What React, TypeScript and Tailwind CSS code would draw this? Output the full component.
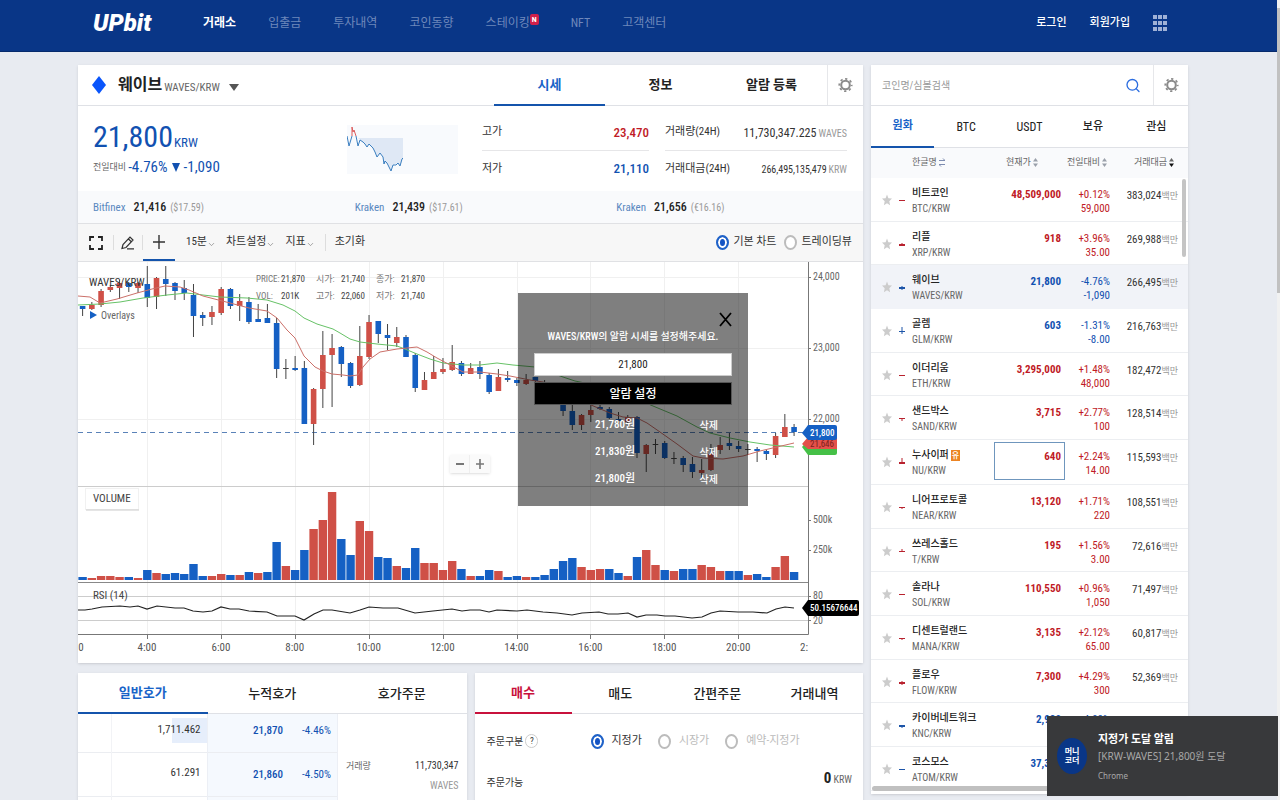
import { useState } from "react";
import type { ReactNode } from "react";
import { ChevronDown, Search } from "lucide-react";

type Coin = {
  name: string;
  code: string;
  price: string;
  rate: string;
  change: string;
  volume: string;
  up: boolean;
  // body height, wick above, wick below
  candle: [number, number, number];
  warn?: boolean;
};

const COINS: Coin[] = [
  { name: "비트코인", code: "BTC", price: "48,509,000", rate: "+0.12%", change: "59,000", volume: "383,024", up: true, candle: [1, 0, 0] },
  { name: "리플", code: "XRP", price: "918", rate: "+3.96%", change: "35.00", volume: "269,988", up: true, candle: [2, 1, 0] },
  { name: "웨이브", code: "WAVES", price: "21,800", rate: "-4.76%", change: "-1,090", volume: "266,495", up: false, candle: [2, 1, 1] },
  { name: "골렘", code: "GLM", price: "603", rate: "-1.31%", change: "-8.00", volume: "216,763", up: false, candle: [1, 4, 2] },
  { name: "이더리움", code: "ETH", price: "3,295,000", rate: "+1.48%", change: "48,000", volume: "182,472", up: true, candle: [1, 0, 0] },
  { name: "샌드박스", code: "SAND", price: "3,715", rate: "+2.77%", change: "100", volume: "128,514", up: true, candle: [1, 0, 2] },
  { name: "누사이퍼", code: "NU", price: "640", rate: "+2.24%", change: "14.00", volume: "115,593", up: true, candle: [2, 4, 0], warn: true },
  { name: "니어프로토콜", code: "NEAR", price: "13,120", rate: "+1.71%", change: "220", volume: "108,551", up: true, candle: [1, 0, 1] },
  { name: "쓰레스홀드", code: "T", price: "195", rate: "+1.56%", change: "3.00", volume: "72,616", up: true, candle: [1, 2, 0] },
  { name: "솔라나", code: "SOL", price: "110,550", rate: "+0.96%", change: "1,050", volume: "71,497", up: true, candle: [1, 0, 0] },
  { name: "디센트럴랜드", code: "MANA", price: "3,135", rate: "+2.12%", change: "65.00", volume: "60,817", up: true, candle: [1, 0, 1] },
  { name: "플로우", code: "FLOW", price: "7,300", rate: "+4.29%", change: "300", volume: "52,369", up: true, candle: [2, 1, 1] },
  { name: "카이버네트워크", code: "KNC", price: "2,980", rate: "-4.98%", change: "", volume: "", up: false, candle: [2, 0, 1] },
  { name: "코스모스", code: "ATOM", price: "37,310", rate: "", change: "", volume: "", up: false, candle: [1, 0, 0] },
];

// high, body top, body bottom, low, kind (r: up, b: down, k: flat)
type Candle = [number, number, number, number, "r" | "b" | "k"];

const CANDLES: Candle[] = [
  [44, 44, 47, 54, "b"], [40, 43, 47, 48, "r"], [27, 29, 43, 45, "r"], [23, 25, 28, 30, "r"],
  [18, 21, 26, 37, "r"], [20, 21, 25, 30, "b"], [20, 21, 26, 31, "r"], [4, 22, 36, 45, "b"],
  [15, 16, 35, 47, "r"], [4, 17, 22, 34, "b"], [20, 21, 29, 38, "b"], [18, 26, 31, 38, "b"],
  [22, 33, 54, 75, "b"], [50, 53, 56, 64, "b"], [44, 50, 55, 63, "r"], [25, 27, 51, 53, "r"],
  [26, 27, 44, 47, "b"], [32, 39, 44, 59, "r"], [35, 40, 60, 62, "b"], [42, 57, 60, 60, "b"],
  [42, 56, 61, 61, "b"], [56, 61, 107, 116, "b"], [97, 106, 107, 117, "k"], [94, 106, 108, 109, "b"],
  [99, 106, 162, 162, "b"], [126, 127, 162, 183, "r"], [69, 93, 127, 146, "r"], [72, 86, 93, 145, "r"],
  [84, 85, 102, 115, "b"], [100, 101, 124, 126, "b"], [64, 94, 123, 124, "r"], [53, 60, 95, 97, "r"],
  [59, 59, 72, 81, "b"], [62, 73, 76, 88, "b"], [65, 75, 81, 85, "r"], [73, 75, 95, 95, "b"],
  [91, 93, 126, 130, "b"], [110, 118, 128, 128, "r"], [94, 110, 117, 117, "r"], [96, 107, 110, 112, "r"],
  [83, 100, 108, 109, "r"], [99, 101, 112, 114, "b"], [101, 106, 112, 112, "r"], [99, 105, 112, 117, "b"],
  [111, 113, 130, 132, "b"], [107, 115, 129, 129, "r"], [109, 116, 118, 120, "b"], [116, 118, 121, 124, "b"],
  [112, 118, 122, 123, "r"], [115, 115, 119, 123, "b"], [118, 120, 130, 133, "b"], [126, 130, 140, 141, "b"],
  [138, 140, 149, 154, "b"], [142, 149, 163, 168, "b"], [152, 153, 163, 168, "r"], [141, 148, 153, 160, "r"],
  [142, 145, 147, 148, "b"], [145, 147, 156, 157, "b"], [150, 157, 159, 161, "b"], [153, 155, 160, 161, "r"],
  [154, 155, 191, 196, "b"], [182, 183, 192, 210, "r"], [177, 182, 183, 192, "k"], [179, 181, 196, 197, "b"],
  [190, 196, 197, 202, "k"], [194, 196, 203, 210, "b"], [195, 202, 210, 216, "b"], [197, 208, 211, 216, "r"],
  [182, 192, 208, 209, "r"], [175, 183, 188, 192, "r"], [171, 181, 184, 188, "b"], [179, 184, 187, 190, "b"],
  [182, 187, 188, 193, "k"], [185, 187, 189, 200, "b"], [188, 189, 192, 198, "b"], [171, 174, 193, 196, "r"],
  [152, 165, 175, 175, "r"], [162, 165, 170, 174, "b"],
];

// bar heights, negative when the candle closed down
const VOLUMES = [
  -3, 2, 4, 4, 3, -3, 2, -10, 7, -6, -7, -6, -16, -4, 4, 6, -5, 5, -8, 7, -8, -38, 14, -10, -30, 51,
  60, 88, -41, -25, 59, 49, -23, -22, 14, -12, -32, 17, 17, 10, 19, -11, 4, -4, -10, 9, -3, -4, 3,
  -3, -5, -11, -19, -22, 13, 10, 11, -11, -7, 4, -23, 30, 15, -10, 9, -11, -11, 15, 13, 9, -9, -9,
  5, -6, -3, 13, 24, -8,
];

const MA_RED =
  "0,34 12,35 22,41 39,37 59,31 74,27 87,24 102,25 111,28 125,34 152,41 171,46 189,49 199,56 209,68 217,76 226,94 237,105 245,109 254,112 265,113 272,114 280,113 285,105 292,97 302,90 319,87 339,85 349,90 359,96 372,103 385,110 402,110 419,112 432,114 452,118 465,120 485,126 499,135 513,143 532,151 545,155 559,156 569,161 582,170 599,182 615,194 625,196 645,197 665,194 682,189 699,185 716,181";

const MA_GREEN =
  "0,43 22,42 42,40 65,36 89,33 109,31 125,33 142,35 169,36 189,38 205,43 217,49 226,56 239,62 255,67 262,71 272,77 282,80 299,82 319,84 327,87 339,92 352,97 365,101 385,103 402,103 419,101 435,103 457,105 485,115 497,119 532,126 575,144 599,154 619,165 632,171 652,176 672,180 692,183 716,185";

const RSI =
  "0,348 7,348 14,347 24,345 42,344 52,345 60,344 69,347 79,344 97,346 106,346 115,349 125,350 134,349 143,345 152,347 161,347 171,349 189,350 199,354 217,354 226,358 236,352 245,348 254,348 272,351 282,348 291,345 305,346 320,346 337,351 355,349 374,347 384,349 392,348 402,348 411,350 419,348 439,349 449,348 465,350 479,351 494,353 504,351 521,350 530,352 540,352 550,351 559,355 568,353 579,353 587,354 597,354 614,356 624,355 633,351 642,349 660,350 675,350 689,351 698,347 707,345 716,346";

const HOURS = ["4:00", "6:00", "8:00", "10:00", "12:00", "14:00", "16:00", "18:00", "20:00"];
const STEP = 9.24;
const FILL = { r: "#cf5047", b: "#1560c4", k: "#444" };

function GearIcon() {
  return (
    <svg viewBox="0 0 16 16" className="h-4 w-[15px]" fill="none" stroke="#8b8b8b">
      <circle cx="8" cy="8" r="4.6" strokeWidth="2.2" />
      <circle cx="8" cy="8" r="6.6" strokeWidth="1.9" strokeDasharray="2.4 2.783" strokeDashoffset="1.2" />
    </svg>
  );
}

function CandleIcon({ candle, up }: { candle: Coin["candle"]; up: boolean }) {
  const [body, above, below] = candle;
  const color = up ? "#b8222f" : "#1d55a8";
  return (
    <svg viewBox="0 0 6 14" className="h-[14px] w-[6px]" fill={color}>
      <rect x="0" y="7" width="6" height={body} />
      <rect x="2.5" y={7 - above} width="1" height={above + body + below} />
    </svg>
  );
}

function TopNav() {
  const items = ["입출금", "투자내역", "코인동향", "스테이킹", "NFT", "고객센터"];
  return (
    <header className="h-[52px] shrink-0 border-b border-[#062a6c] bg-[#093687] pr-[113px] pl-[93px] text-white">
      <div className="flex h-[46px] items-center">
        <a href="#" className="w-[110px] font-[Roboto] text-[24px] leading-none font-black italic">
          UPbit
        </a>
        <nav className="flex flex-1 items-center gap-8 text-[12px]">
          <a href="#" className="font-bold">거래소</a>
          {items.map((item) => (
            <a key={item} href="#" className="flex items-start text-[#6f88bb]">
              {item}
              {item === "스테이킹" && (
                <span className="rounded-[2px] bg-[#d0204b] px-0.5 text-[8px] leading-[11px] font-bold text-white">
                  N
                </span>
              )}
            </a>
          ))}
        </nav>
        <div className="flex items-center gap-[23px] text-[11px] font-medium">
          <a href="#">로그인</a>
          <a href="#">회원가입</a>
          <button type="button" aria-label="메뉴" className="grid grid-cols-3 gap-x-px gap-y-0.5">
            {Array.from({ length: 9 }, (_, i) => (
              <span key={i} className="h-1 w-1 bg-[#9fb1d6]" />
            ))}
          </button>
        </div>
      </div>
    </header>
  );
}

function Sparkline() {
  return (
    <svg viewBox="0 0 111 49" className="mt-[19px] h-[49px] w-[111px]" fill="none" strokeLinejoin="round">
      <rect width="111" height="49" fill="#f8fafd" />
      <path
        d="M11 13 L13 15 L18 19 L20 22 L22 19 L26 23 L30 32 L33 28 L36 32 L37 39 L40 38 L44 46 L46 40 L51 38 L53 41 L56 33 V13Z"
        fill="#dfe8f5"
      />
      <path
        d="M0 11 L2 21 L5 11 M9 11 L11 21 L13 15 L16 17 L18 19 L20 22 L22 19 L26 23 L28 27 L30 32 L33 28 L36 32 L37 39 L38 36 L40 38 L44 46 L46 40 L49 40 L51 38 L53 41 L55 34 L56 33"
        stroke="#3b7fc0"
      />
      <path d="M5 11 L5 2 L6 7 L7 5 L9 11" stroke="#dc5b5b" />
    </svg>
  );
}

function Stat({ label, value, unit, tone }: { label: string; value: string; unit?: string; tone: string }) {
  return (
    <div className="flex h-9 items-center justify-between">
      <dt className="text-[11px] text-[#333]">{label}</dt>
      <dd className={tone}>
        {value}
        {unit && <span className="ml-0.5 text-[10px] text-[#999]">{unit}</span>}
      </dd>
    </div>
  );
}

function CoinSummary() {
  const exchanges = [
    ["Bitfinex", "21,416", "($17.59)"],
    ["Kraken", "21,439", "($17.61)"],
    ["Kraken", "21,656", "(€16.16)"],
  ];
  return (
    <>
      <div className="flex h-[41px] border-b border-[#dfe1e6]">
        <div className="flex flex-1 items-center pl-[14px]">
          <svg viewBox="0 0 14 18" className="mr-3 h-[18px] w-[14px]">
            <path d="M7 0 L14 9 L7 18 L0 9Z" fill="#0a55fb" />
          </svg>
          <h1 className="text-[16px] font-bold text-[#222]">웨이브</h1>
          <span className="mt-1.5 ml-0.5 text-[11px] text-[#666]">WAVES/KRW</span>
          <button type="button" aria-label="코인 선택" className="mt-1 ml-[9px]">
            <svg viewBox="0 0 10 7" className="h-[7px] w-[10px]">
              <path d="M0 0H10L5 7Z" fill="#555" />
            </svg>
          </button>
        </div>
        <div className="flex text-[13px] font-bold text-[#222]">
          <button type="button" className="h-[41px] w-[111px] border-b-2 border-[#1454ac] text-[#1863c8]">시세</button>
          <button type="button" className="w-[111px]">정보</button>
          <button type="button" className="w-[111px]">알람 등록</button>
          <button type="button" aria-label="설정" className="flex w-9 items-center justify-center border-l border-[#e6e7ea]">
            <GearIcon />
          </button>
        </div>
      </div>

      <div className="flex h-[85px] pr-4 pl-[15px]">
        <div className="w-[254px]">
          <p className="mt-3 flex items-baseline leading-[38px] text-[#1151b1]">
            <strong className="text-[30px] font-normal">21,800</strong>
            <span className="ml-px text-[13px]">KRW</span>
          </p>
          <p className="-mt-1 flex items-center text-[15px] leading-[18px] text-[#1151b1]">
            <span className="mr-0.5 text-[9px] text-[#666]">전일대비</span>
            -4.76%
            <svg viewBox="0 0 8 9" className="mx-1 h-[9px] w-2">
              <path d="M0 0H8L4 9Z" fill="#1151b1" />
            </svg>
            -1,090
          </p>
        </div>
        <Sparkline />
        <dl className="ml-6 grid flex-1 grid-cols-[167fr_182fr] gap-x-4 pt-[9px]">
          <div className="divide-y divide-[#e6e6e8]">
            <Stat label="고가" value="23,470" tone="text-[13px] font-medium text-[#c01a26]" />
            <Stat label="저가" value="21,110" tone="text-[13px] font-medium text-[#1151b1]" />
          </div>
          <div className="divide-y divide-[#e6e6e8]">
            <Stat label="거래량(24H)" value="11,730,347.225" unit="WAVES" tone="text-[12px] text-[#333]" />
            <Stat label="거래대금(24H)" value="266,495,135,479" unit="KRW" tone="text-[10px] text-[#333]" />
          </div>
        </dl>
      </div>

      <div className="grid h-8 grid-cols-3 items-center bg-[#f9fafc]">
        {exchanges.map(([name, price, usd]) => (
          <p key={price} className="pl-[15px] text-[12px] font-medium text-[#222]">
            <span className="mr-2 text-[11px] font-normal text-[#5a88c0]">{name}</span>
            {price}
            <span className="ml-1 text-[10px] font-normal text-[#999]">{usd}</span>
          </p>
        ))}
      </div>
    </>
  );
}

function Radio({ name, checked, onChange, children }: {
  name: string;
  checked: boolean;
  onChange: () => void;
  children: ReactNode;
}) {
  return (
    <label className="flex items-center gap-1">
      <input
        type="radio"
        name={name}
        checked={checked}
        onChange={onChange}
        className="h-[15px] w-[13px] shrink-0 appearance-none rounded-[50%] border-2 border-[#bcbcbc] bg-white checked:border-[#1f62c8] checked:bg-[#1454c4] checked:shadow-[inset_0_0_0_2px_white]"
      />
      {children}
    </label>
  );
}

function ChartToolbar() {
  const [view, setView] = useState("basic");
  return (
    <div className="flex h-[39px] items-center border-y border-[#e0e1e4] bg-[#f7f7f7] pr-[11px] text-[11px] text-[#333]">
      <button type="button" aria-label="전체화면" className="flex w-[35px] justify-center">
        <svg viewBox="0 0 14 14" className="h-[14px] w-[14px]" fill="none" stroke="#222" strokeWidth="1.8">
          <path d="M1 5V1H5 M9 1H13V5 M13 9V13H9 M5 13H1V9" />
        </svg>
      </button>
      <button type="button" aria-label="그리기" className="flex w-[30px] justify-center border-x border-[#ddd]">
        <svg viewBox="0 0 14 14" className="h-[15px] w-[14px]" fill="none" stroke="#333" strokeWidth="1.2">
          <path d="M1 13 L2 9 L9 1.5 L12 4.5 L5 12 Z M7.5 3.5 L10.5 6.5 M6 13.3 H13" />
        </svg>
      </button>
      <button type="button" aria-label="십자선" className="flex h-[37px] w-8 items-center justify-center border-b-2 border-[#1454ac]">
        <svg viewBox="0 0 12 14" className="h-[14px] w-3" stroke="#333" strokeWidth="1.4">
          <path d="M6 0V14 M0 7H12" />
        </svg>
      </button>
      <div className="ml-[11px] flex items-center gap-[10px]">
        {["15분", "차트설정", "지표"].map((item) => (
          <button key={item} type="button" className="flex items-center">
            {item}
            <ChevronDown className="mt-1 h-[9px] w-[9px] text-[#888]" />
          </button>
        ))}
        <button type="button" className="border-l border-[#ddd] pl-[9px]">초기화</button>
      </div>
      <div className="ml-auto flex gap-2">
        <Radio name="chart" checked={view === "basic"} onChange={() => setView("basic")}>기본 차트</Radio>
        <Radio name="chart" checked={view === "tv"} onChange={() => setView("tv")}>트레이딩뷰</Radio>
      </div>
    </div>
  );
}

function PriceChart() {
  return (
    <svg viewBox="0 0 785 401" className="block h-auto w-full" role="img" aria-label="WAVES/KRW 15분 차트">
      <g stroke="#f0f0f0">
        <path d="M0 15.5H730 M0 86.5H730 M0 157.5H730" />
        {HOURS.map((hour, i) => (
          <path key={hour} d={`M${Math.round(69 + i * 73.9) + 0.5} 0V372`} />
        ))}
      </g>
      <path d="M0 170.5H726" stroke="#5a82b8" strokeDasharray="5 4" />

      {CANDLES.map(([high, top, bottom, low, kind], i) => {
        const x = 4.6 + i * STEP;
        return (
          <g key={i}>
            <rect x={x - 0.5} y={high} width="1" height={low - high} fill="#444" />
            <rect x={x - 2.8} y={top} width="5.6" height={Math.max(bottom - top, 1)} fill={FILL[kind]} />
          </g>
        );
      })}
      <polyline points={MA_GREEN} fill="none" stroke="#67c267" />
      <polyline points={MA_RED} fill="none" stroke="#cb7069" />

      {VOLUMES.map((volume, i) => (
        <rect
          key={i}
          x={0.4 + i * STEP}
          y={318 - Math.abs(volume)}
          width="8.4"
          height={Math.abs(volume)}
          fill={volume > 0 ? FILL.r : FILL.b}
        />
      ))}

      <path d="M0 224.5H730 M0 334.5H730 M0 358.5H730" stroke="#ccc" />
      <path d="M0 320.5H730" stroke="#888" />
      <path d="M0 372.5H730.5V0 M730 15.5H733 M730 86.5H733 M730 157.5H733 M730 258.5H733 M730 288.5H733 M730 334.5H733 M730 358.5H733" fill="none" stroke="#777" />
      <polyline points={RSI} fill="none" stroke="#222" strokeWidth="1.2" />

      <g className="fill-[#666] text-[10px]">
        <text x="735" y="18">24,000</text>
        <text x="735" y="89">23,000</text>
        <text x="735" y="160">22,000</text>
        <text x="735" y="261">500k</text>
        <text x="735" y="291">250k</text>
        <text x="735" y="337">80</text>
        <text x="735" y="362">20</text>
      </g>
      <g className="fill-[#555] text-[11px]" textAnchor="middle">
        {HOURS.map((hour, i) => (
          <g key={hour}>
            <path d={`M${Math.round(69 + i * 73.9) + 0.5} 372v5`} stroke="#777" />
            <text x={69 + i * 73.9} y="389">{hour}</text>
          </g>
        ))}
        <text x="3" y="389">0</text>
        <text x="726" y="389">2:</text>
      </g>

      <path d="M724 185L730 178H757Q759 178 759 180V191Q759 193 757 193H730Z" fill="#45c047" />
      <path d="M724 182L730 175H759V187H730Z" fill="#e4504a" />
      <text x="732" y="185" className="fill-[#7c1d1a] text-[9px]">21,646</text>
      <path d="M724 171L730 163H757Q759 163 759 165V176Q759 178 757 178H730Z" fill="#1560c4" />
      <text x="732" y="174" className="fill-white text-[9px] font-medium">21,800</text>
      <path d="M724 346L730 338H779Q781 338 781 340V352Q781 354 779 354H730Z" fill="#000" />
      <text x="732" y="349" className="fill-white text-[9px] font-medium">50.15676644</text>

      <text x="11" y="24" className="fill-[#333] text-[11px]">WAVES/KRW</text>
      <path d="M12 49L19 53L12 57Z" fill="#1560c4" />
      <text x="23" y="57" className="fill-[#666] text-[10px]">Overlays</text>
      <g className="fill-[#777] text-[9px]">
        <text x="178" y="20">PRICE:</text>
        <text x="178" y="37">VOL:</text>
        <text x="238" y="20">시가:</text>
        <text x="238" y="37">고가:</text>
        <text x="298" y="20">종가:</text>
        <text x="298" y="37">저가:</text>
      </g>
      <g className="fill-[#444] text-[9px]">
        <text x="203" y="20">21,870</text>
        <text x="203" y="37">201K</text>
        <text x="263" y="20">21,740</text>
        <text x="263" y="37">22,060</text>
        <text x="323" y="20">21,870</text>
        <text x="323" y="37">21,740</text>
      </g>

      <rect x="7.5" y="226.5" width="53" height="21" fill="#fff" stroke="#f1f1f1" />
      <path d="M8 248H61" stroke="#ccc" />
      <text x="15" y="240" className="fill-[#444] text-[11px]">VOLUME</text>
      <text x="15" y="337" className="fill-[#444] text-[11px]">RSI (14)</text>
    </svg>
  );
}

function AlarmPopup() {
  const [price, setPrice] = useState("21,800");
  const [alarms, setAlarms] = useState(["21,780", "21,830", "21,800"]);
  return (
    <section className="absolute top-[31px] left-[440px] h-[213px] w-[230px] bg-black/50 px-4 pt-[19px] text-white">
      <div className="flex justify-end">
        <button type="button" aria-label="닫기">
          <svg viewBox="0 0 13 15" className="h-[15px] w-[13px]" stroke="#000" strokeWidth="1.8">
            <path d="M1 1L12 14 M12 1L1 14" />
          </svg>
        </button>
      </div>
      <label htmlFor="alarm-price" className="mt-0.5 block text-center text-[10px] leading-[16px] font-medium">
        WAVES/KRW의 알람 시세를 설정해주세요.
      </label>
      <input
        id="alarm-price"
        value={price}
        onChange={(event) => setPrice(event.target.value)}
        className="mt-2 block h-[23px] w-full border border-[#ccc] bg-white text-center text-[11px] text-[#222]"
      />
      <button
        type="button"
        onClick={() => setAlarms([...alarms, price])}
        className="mt-[6px] h-[23px] w-full border border-[#555] bg-black text-[12px] font-medium"
      >
        알람 설정
      </button>
      <ul className="mt-[7px] text-[11px] font-medium">
        {alarms.map((alarm) => (
          <li key={alarm} className="flex h-[27px] items-center justify-between pr-[14px] pl-[61px]">
            {alarm}원
            <button type="button" className="text-[10px]" onClick={() => setAlarms(alarms.filter((item) => item !== alarm))}>삭제</button>
          </li>
        ))}
      </ul>
    </section>
  );
}

function OrderBook() {
  const rows = [
    ["1,711.462", "21,870", "-4.46%"],
    ["61.291", "21,860", "-4.50%"],
    ["", "", ""],
  ];
  return (
    <section className="bg-white shadow-sm">
      <div className="grid h-[41px] grid-cols-3 border-b border-[#dfe1e6] text-[13px] font-medium text-[#222]">
        <button type="button" className="h-[41px] border-b-2 border-[#1454ac] font-bold text-[#1863c8]">일반호가</button>
        <button type="button">누적호가</button>
        <button type="button">호가주문</button>
      </div>
      <div className="flex">
        <table className="w-[260px] table-fixed">
          <tbody>
            {rows.map(([amount, price, rate], i) => (
              <tr key={i} className={i === 0 ? "h-[38px] border-b border-[#ebedf1] align-top" : "h-[44px] border-b border-[#ebedf1] align-top"}>
                <td className="w-[33px] border-r border-[#f2f3f6]" />
                <td className={i === 0 ? "w-[96px] pt-1 text-right text-[11px] text-[#333]" : "w-[96px] pt-3 text-right text-[11px] text-[#333]"}>
                  <span className={i === 0 ? "inline-block bg-linear-to-l from-[#e6eefb] from-70% to-transparent to-70% py-1 pr-1.5" : "pr-1.5"}>
                    {amount}
                  </span>
                </td>
                <td className={i === 0 ? "w-[76px] border-l border-[#eceff5] bg-[#f5f9fe] pt-[9px] text-right text-[11px] font-medium text-[#1151b1]" : "w-[76px] border-l border-[#eceff5] bg-[#f5f9fe] pt-[14px] text-right text-[11px] font-medium text-[#1151b1]"}>
                  {price}
                </td>
                <td className={i === 0 ? "border-r border-[#eceff5] bg-[#f5f9fe] pt-[9px] pr-1.5 text-right text-[11px] text-[#1151b1]" : "border-r border-[#eceff5] bg-[#f5f9fe] pt-[14px] pr-1.5 text-right text-[11px] text-[#1151b1]"}>
                  {rate}
                </td>
              </tr>
            ))}
          </tbody>
        </table>
        <dl className="flex flex-1 justify-between px-2 pt-[44px] text-[10px] leading-[16px]">
          <dt className="text-[9px] text-[#666]">거래량</dt>
          <dd className="text-right text-[#333]">
            11,730,347
            <span className="mt-1 block text-[#999]">WAVES</span>
          </dd>
        </dl>
      </div>
    </section>
  );
}

function OrderForm() {
  const [type, setType] = useState("지정가");
  return (
    <section className="bg-white shadow-sm">
      <div className="grid h-[41px] grid-cols-4 border-b border-[#dfe1e6] text-[13px] font-medium text-[#222]">
        <button type="button" className="h-[41px] border-b-2 border-[#c8113c] font-bold text-[#c8113c]">매수</button>
        <button type="button">매도</button>
        <button type="button">간편주문</button>
        <button type="button">거래내역</button>
      </div>
      <form className="pr-[11px] pl-3 text-[#333]">
        <fieldset className="flex h-[54px] items-center">
          <div className="flex w-[104px] items-center gap-0.5 text-[10px]">
            주문구분
            <button type="button" aria-label="도움말" className="h-[14px] w-[13px] rounded-full border border-[#ccc] text-[9px] leading-[12px]">?</button>
          </div>
          <div className="flex gap-4 text-[11px]">
            {["지정가", "시장가", "예약-지정가"].map((item) => (
              <Radio key={item} name="order" checked={type === item} onChange={() => setType(item)}>
                <span className={type === item ? "ml-1" : "ml-1 text-[#bbb]"}>{item}</span>
              </Radio>
            ))}
          </div>
        </fieldset>
        <div className="flex h-[28px] items-center justify-between text-[10px]">
          주문가능
          <p className="-mt-2 text-[10px] text-[#666]">
            <strong className="text-[15px] font-bold text-[#222]">0</strong> KRW
          </p>
        </div>
      </form>
    </section>
  );
}

function SortIcon({ active }: { active?: boolean }) {
  return (
    <svg viewBox="0 0 5 9" className="ml-0.5 inline-block h-[9px] w-[5px]">
      <path d="M0 3.5L2.5 0L5 3.5Z" fill={active ? "#666" : "#9aa0aa"} />
      <path d="M0 5.5H5L2.5 9Z" fill={active ? "#111" : "#9aa0aa"} />
    </svg>
  );
}

function CoinRow({ coin, selected }: { coin: Coin; selected: boolean }) {
  const tone = coin.up ? "text-[#c01a26]" : "text-[#1151b1]";
  return (
    <tr className={selected ? "border-b border-[#f1f3f8] bg-[#f1f3f8]" : "border-b border-[#eceef1]"}>
      <td className="pt-4 pl-[11px]">
        <button type="button" aria-label={`${coin.name} 관심 등록`} className="block">
          <svg viewBox="0 0 10 12" className="h-3 w-[10px]">
            <path d="M5 .5L6.4 4.2L10 4.6L7.3 7.2L8.1 11.2L5 9.2L1.9 11.2L2.7 7.2L0 4.6L3.6 4.2Z" fill="#ccc" />
          </svg>
        </button>
      </td>
      <td className="pt-[15px] pl-0.5">
        <CandleIcon candle={coin.candle} up={coin.up} />
      </td>
      <td className="pt-[7px]">
        <a href="#" className="block leading-4 whitespace-nowrap">
          <span className="flex items-center text-[10px] font-medium text-[#222]">
            {coin.name}
            {coin.warn && <span className="ml-0.5 bg-[#ec8423] px-px text-[8px] leading-[11px] text-white">유</span>}
          </span>
          <span className="block text-[10px] text-[#666]">{coin.code}/KRW</span>
        </a>
      </td>
      <td className={coin.warn ? "pt-0.5" : "pt-[9px]"}>
        <p className={coin.warn ? `h-[38px] border border-[#6f96bd] pt-1.5 pr-[3px] text-right text-[11px] leading-4 font-bold ${tone}` : `pr-1 text-right text-[11px] leading-4 font-bold ${tone}`}>
          {coin.price}
        </p>
      </td>
      <td className={`pt-[10px] text-right text-[11px] leading-[14px] ${tone}`}>
        {coin.rate}
        <br />
        {coin.change}
      </td>
      <td className="pt-[10px] pr-[10px] text-right text-[11px] leading-4 whitespace-nowrap text-[#333]">
        {coin.volume}
        {coin.volume && <span className="text-[9px] text-[#999]">백만</span>}
      </td>
    </tr>
  );
}

function CoinList() {
  const [keyword, setKeyword] = useState("");
  return (
    <aside className="bg-white shadow-sm">
      <div className="flex h-[41px] border-b border-[#dfe1e6]">
        <input
          type="search"
          aria-label="코인명/심볼검색"
          placeholder="코인명/심볼검색"
          value={keyword}
          onChange={(event) => setKeyword(event.target.value)}
          className="min-w-0 flex-1 pl-[11px] text-[10px] outline-none placeholder:text-[#999]"
        />
        <button type="button" aria-label="검색" className="flex w-10 items-center justify-center text-[#2b6de0]">
          <Search className="h-[17px] w-4" />
        </button>
        <button type="button" aria-label="설정" className="flex w-[35px] items-center justify-center border-l border-[#e6e7ea]">
          <GearIcon />
        </button>
      </div>
      <div className="grid h-[42px] grid-cols-5 border-b border-[#dfe1e6] text-[12px] text-[#222]">
        <button type="button" className="h-[42px] border-b-2 border-[#1454ac] text-[11px] font-bold text-[#1863c8]">원화</button>
        <button type="button">BTC</button>
        <button type="button">USDT</button>
        <button type="button" className="text-[11px] font-medium">보유</button>
        <button type="button" className="text-[11px] font-medium">관심</button>
      </div>
      <div className="relative">
        <table className="h-[643px] w-full table-fixed">
          <colgroup>
            <col className="w-[26px]" />
            <col className="w-[15px]" />
            <col />
            <col className="w-[71px]" />
            <col className="w-[45px]" />
            <col className="w-[78px]" />
          </colgroup>
          <thead>
            <tr className="h-[30px] bg-[#f9fafc] text-[9px] whitespace-nowrap text-[#666]">
              <th colSpan={2} />
              <th className="text-left font-normal">
                한글명
                <svg viewBox="0 0 6 9" className="ml-0.5 inline-block h-[9px] w-[6px]" fill="none" stroke="#7d8cb0">
                  <path d="M0 2.5H6L4 .5 M6 6.5H0L2 8.5" />
                </svg>
              </th>
              <th className="pl-3 text-left font-normal">현재가<SortIcon /></th>
              <th className="pl-0.5 text-left font-normal">전일대비<SortIcon /></th>
              <th className="pr-[14px] text-right font-normal">거래대금<SortIcon active /></th>
            </tr>
          </thead>
          <tbody className="align-top">
            {COINS.map((coin) => (
              <CoinRow key={coin.code} coin={coin} selected={coin.code === "WAVES"} />
            ))}
          </tbody>
        </table>
        <span className="absolute top-[31px] right-0.5 h-[78px] w-1 rounded-full bg-[#c4c4c4]" />
        <span className="absolute bottom-0 left-px h-[5px] w-[309px] rounded-full bg-[#c0c0c0]" />
      </div>
      <div className="h-[3px]" />
    </aside>
  );
}

function Toast() {
  return (
    <div role="status" className="fixed right-0.5 bottom-1 flex h-[80px] w-[231px] items-center bg-[#38393b] pl-[10px] text-[11px]">
      <span className="flex h-9 w-[30px] items-center justify-center rounded-[50%] bg-[#093687] text-center text-[8px] leading-[9px] font-bold text-white">
        머니
        <br />
        코더
      </span>
      <div className="ml-[11px] pt-1 leading-4">
        <p className="font-bold text-white">지정가 도달 알림</p>
        <p className="font-['Noto_Sans','Noto_Sans_CJK_KR',sans-serif] text-[10px] leading-4 text-[#a8a8a8]">[KRW-WAVES] 21,800원 도달</p>
        <p className="mt-1 font-['Noto_Sans',sans-serif] text-[8px] leading-4 text-[#a8a8a8]">Chrome</p>
      </div>
    </div>
  );
}

export default function App() {
  return (
    <div className="flex h-screen flex-col overflow-y-auto bg-[#e8ebf1] [font-family:'Roboto_Condensed',Roboto,'Noto_Sans_CJK_KR',sans-serif] [scrollbar-width:none]">
      <TopNav />
      <main className="grid grid-cols-[minmax(0,1fr)_317px] items-start gap-2 pt-[13px] pr-[92px] pl-[78px]">
        <div>
          <div className="bg-white shadow-sm">
            <CoinSummary />
            <ChartToolbar />
            <div className="relative">
              <PriceChart />
              <div className="absolute top-[193px] left-[372px] flex bg-[#fafafa] shadow">
                <button type="button" aria-label="축소" className="flex h-[18px] w-5 items-center justify-center border-r border-[#eee]">
                  <span className="h-0.5 w-2 bg-[#777]" />
                </button>
                <button type="button" aria-label="확대" className="flex h-[18px] w-5 items-center justify-center">
                  <svg viewBox="0 0 8 10" className="h-[10px] w-2" stroke="#777" strokeWidth="1.6">
                    <path d="M4 0V10 M0 5H8" />
                  </svg>
                </button>
              </div>
              <AlarmPopup />
            </div>
          </div>
          <div className="mt-[10px] grid grid-cols-2 gap-2">
            <OrderBook />
            <OrderForm />
          </div>
        </div>
        <CoinList />
      </main>
      <div className="fixed top-0 right-0 h-full w-[3px] bg-[#f1f1f1]">
        <div className="mt-2 h-[285px] bg-[#c1c1c1]" />
      </div>
      <Toast />
    </div>
  );
}
